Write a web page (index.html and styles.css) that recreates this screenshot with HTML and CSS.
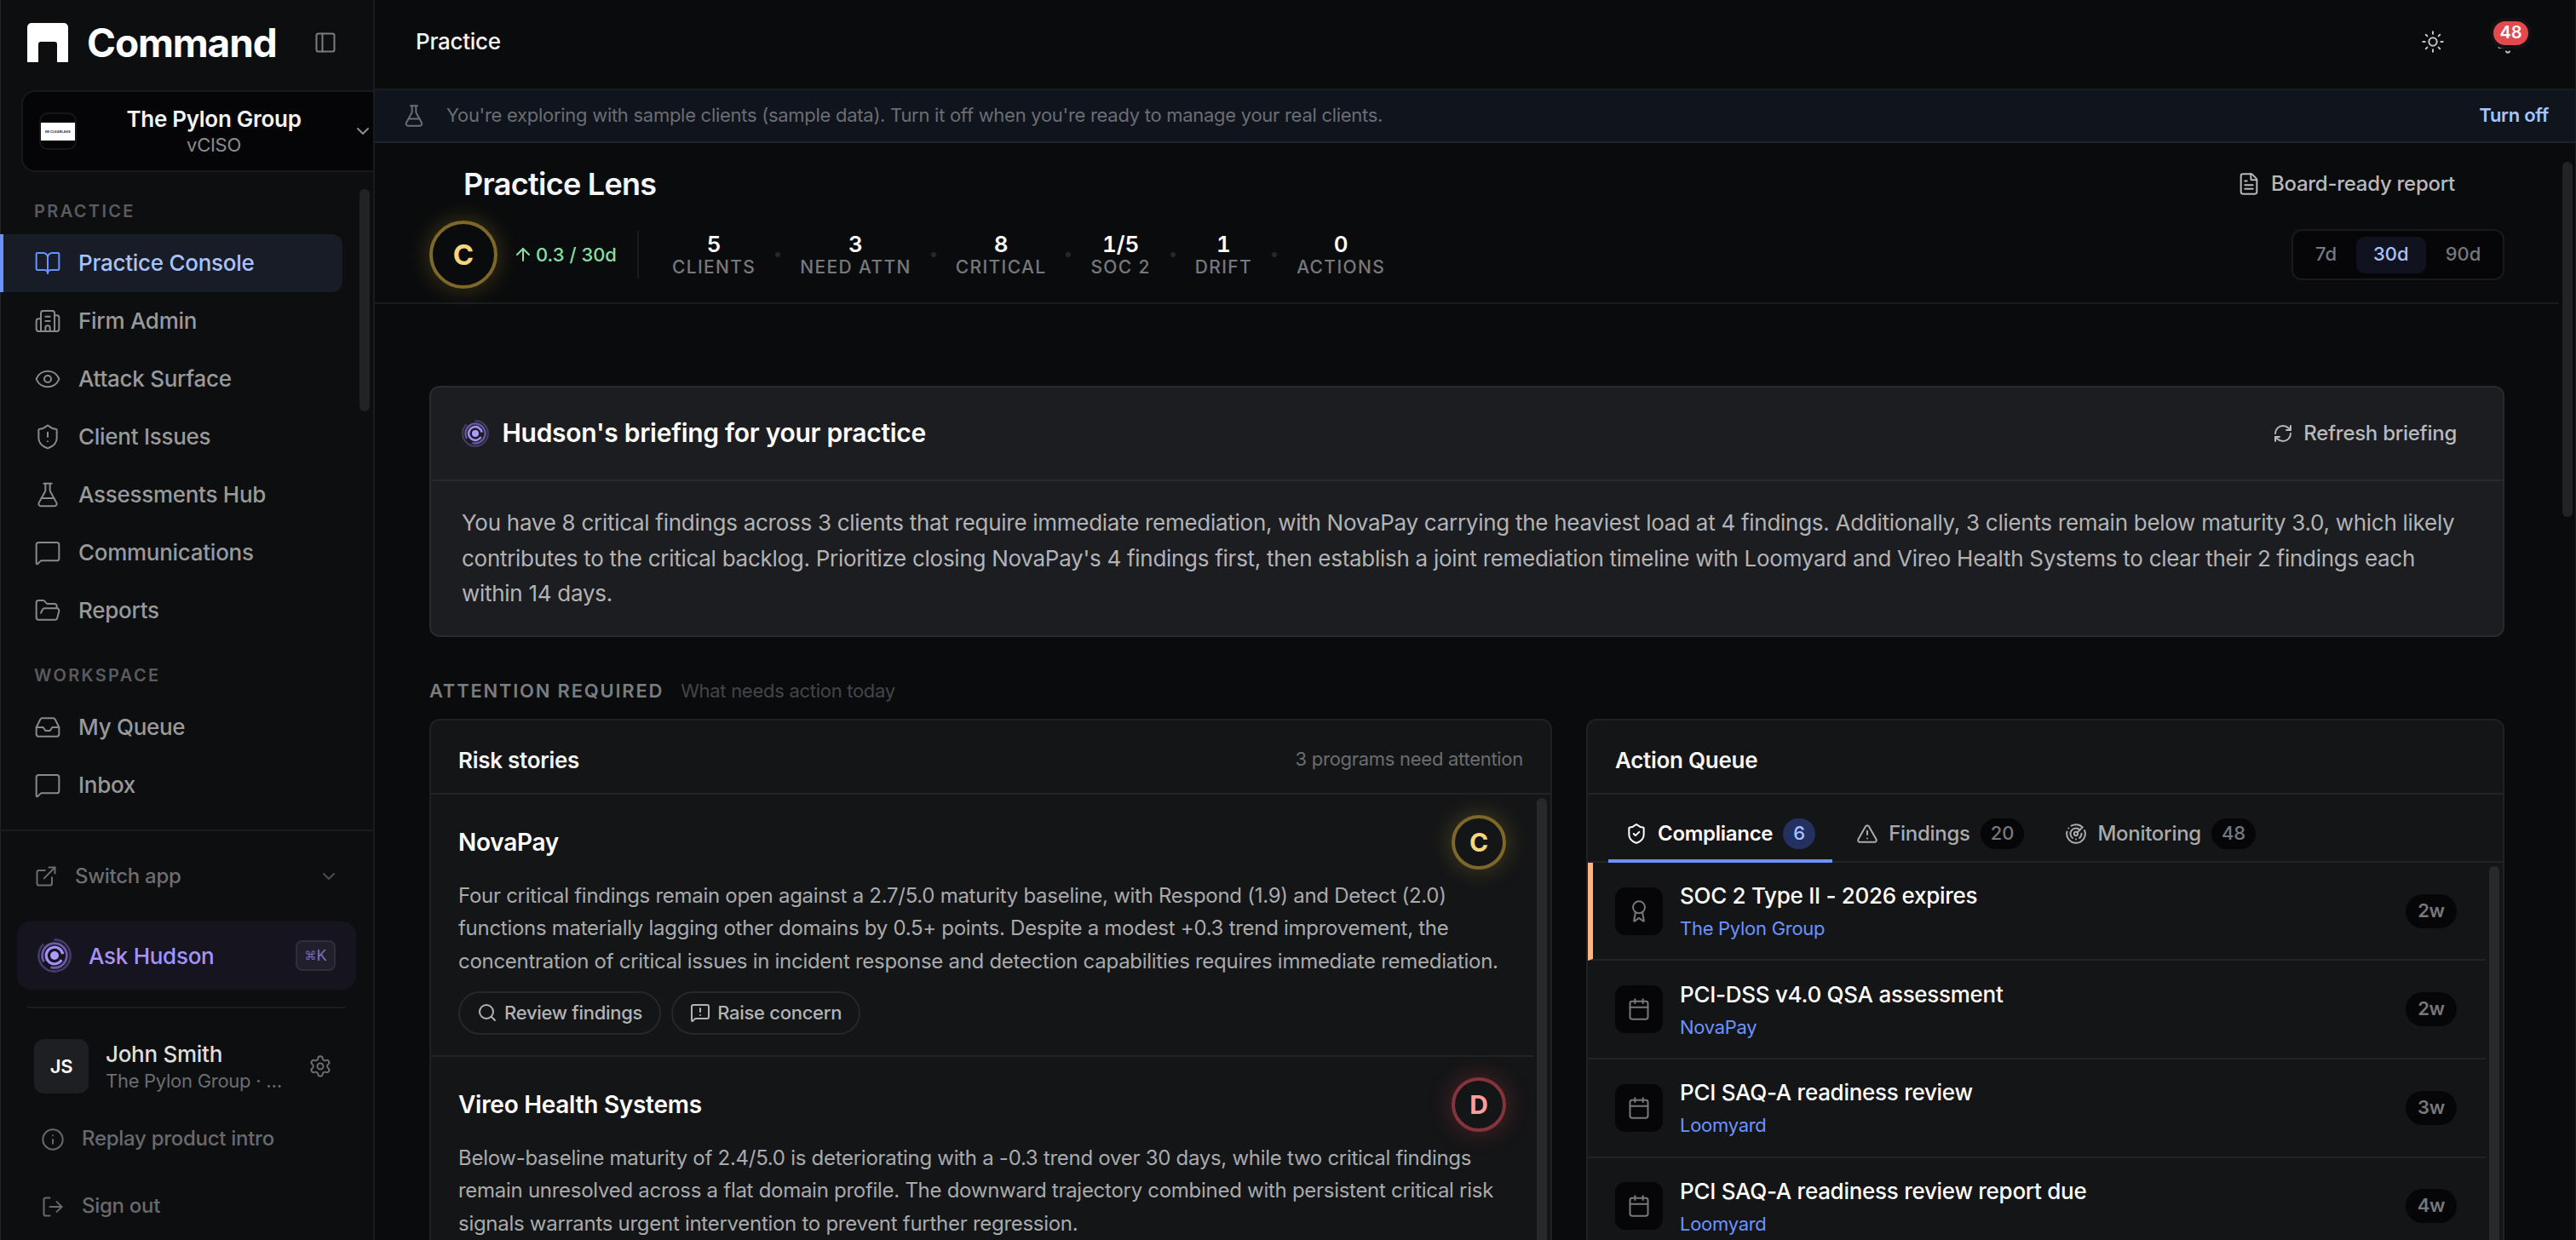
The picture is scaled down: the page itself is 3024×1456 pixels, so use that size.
FILE: index.html
```html
<!DOCTYPE html>
<html lang="en">
<head>
<meta charset="utf-8">
<title>Command – Practice Lens</title>
<link rel="stylesheet" href="styles.css">
</head>
<body>
<svg class="sprite" aria-hidden="true">
  <symbol id="panel" viewBox="0 0 24 24"><rect x="3" y="3" width="18" height="18" rx="2"/><path d="M9 3v18"/></symbol>
  <symbol id="chevron" viewBox="0 0 24 24"><path d="m6 9 6 6 6-6"/></symbol>
  <symbol id="book" viewBox="0 0 24 24"><path d="M12 7v14"/><path d="M3 18a1 1 0 0 1-1-1V4a1 1 0 0 1 1-1h5a4 4 0 0 1 4 4 4 4 0 0 1 4-4h5a1 1 0 0 1 1 1v13a1 1 0 0 1-1 1h-6a3 3 0 0 0-3 3 3 3 0 0 0-3-3z"/></symbol>
  <symbol id="building" viewBox="0 0 24 24"><path d="M10 12h4"/><path d="M10 8h4"/><path d="M14 21v-3a2 2 0 0 0-4 0v3"/><path d="M6 10H4a2 2 0 0 0-2 2v7a2 2 0 0 0 2 2h16a2 2 0 0 0 2-2V9a2 2 0 0 0-2-2h-2"/><path d="M6 21V5a2 2 0 0 1 2-2h8a2 2 0 0 1 2 2v16"/></symbol>
  <symbol id="eye" viewBox="0 0 24 24"><path d="M2.062 12.348a1 1 0 0 1 0-.696 10.75 10.75 0 0 1 19.876 0 1 1 0 0 1 0 .696 10.75 10.75 0 0 1-19.876 0"/><circle cx="12" cy="12" r="3"/></symbol>
  <symbol id="shield-alert" viewBox="0 0 24 24"><path d="M20 13c0 5-3.5 7.5-7.66 8.95a1 1 0 0 1-.67-.01C7.5 20.5 4 18 4 13V6a1 1 0 0 1 1-1c2 0 4.5-1.2 6.24-2.72a1.17 1.17 0 0 1 1.52 0C14.51 3.81 17 5 19 5a1 1 0 0 1 1 1z"/><path d="M12 8v4"/><path d="M12 16h.01"/></symbol>
  <symbol id="shield-check" viewBox="0 0 24 24"><path d="M20 13c0 5-3.5 7.5-7.66 8.95a1 1 0 0 1-.67-.01C7.5 20.5 4 18 4 13V6a1 1 0 0 1 1-1c2 0 4.5-1.2 6.24-2.72a1.17 1.17 0 0 1 1.52 0C14.51 3.81 17 5 19 5a1 1 0 0 1 1 1z"/><path d="m9 12 2 2 4-4"/></symbol>
  <symbol id="flask" viewBox="0 0 24 24"><path d="M14 2v6a2 2 0 0 0 .245.96l5.51 10.08A2 2 0 0 1 18 22H6a2 2 0 0 1-1.755-2.96l5.51-10.08A2 2 0 0 0 10 8V2"/><path d="M6.453 15h11.094"/><path d="M8.5 2h7"/></symbol>
  <symbol id="message" viewBox="0 0 24 24"><path d="M22 17a2 2 0 0 1-2 2H6.828a2 2 0 0 0-1.414.586l-2.202 2.202A.71.71 0 0 1 2 21.286V5a2 2 0 0 1 2-2h16a2 2 0 0 1 2 2z"/></symbol>
  <symbol id="message-warning" viewBox="0 0 24 24"><path d="M22 17a2 2 0 0 1-2 2H6.828a2 2 0 0 0-1.414.586l-2.202 2.202A.71.71 0 0 1 2 21.286V5a2 2 0 0 1 2-2h16a2 2 0 0 1 2 2z"/><path d="M12 15h.01"/><path d="M12 7v4"/></symbol>
  <symbol id="folder" viewBox="0 0 24 24"><path d="m6 14 1.5-2.9A2 2 0 0 1 9.24 10H20a2 2 0 0 1 1.94 2.5l-1.54 6a2 2 0 0 1-1.95 1.5H4a2 2 0 0 1-2-2V5a2 2 0 0 1 2-2h3.9a2 2 0 0 1 1.69.9l.81 1.2a2 2 0 0 0 1.67.9H18a2 2 0 0 1 2 2v2"/></symbol>
  <symbol id="tray" viewBox="0 0 24 24"><path d="M22 12h-6l-2 3h-4l-2-3H2"/><path d="M5.45 5.11 2 12v6a2 2 0 0 0 2 2h16a2 2 0 0 0 2-2v-6l-3.45-6.89A2 2 0 0 0 16.76 4H7.24a2 2 0 0 0-1.79 1.11z"/></symbol>
  <symbol id="external" viewBox="0 0 24 24"><path d="M15 3h6v6"/><path d="M10 14 21 3"/><path d="M18 13v6a2 2 0 0 1-2 2H5a2 2 0 0 1-2-2V8a2 2 0 0 1 2-2h6"/></symbol>
  <symbol id="gear" viewBox="0 0 24 24"><path d="M9.671 4.136a2.34 2.34 0 0 1 4.659 0 2.34 2.34 0 0 0 3.319 1.915 2.34 2.34 0 0 1 2.33 4.033 2.34 2.34 0 0 0 0 3.831 2.34 2.34 0 0 1-2.33 4.033 2.34 2.34 0 0 0-3.319 1.915 2.34 2.34 0 0 1-4.659 0 2.34 2.34 0 0 0-3.32-1.915 2.34 2.34 0 0 1-2.33-4.033 2.34 2.34 0 0 0 0-3.831A2.34 2.34 0 0 1 6.35 6.051a2.34 2.34 0 0 0 3.319-1.915"/><circle cx="12" cy="12" r="3"/></symbol>
  <symbol id="info" viewBox="0 0 24 24"><circle cx="12" cy="12" r="10"/><path d="M12 16v-4"/><path d="M12 8h.01"/></symbol>
  <symbol id="logout" viewBox="0 0 24 24"><path d="m16 17 5-5-5-5"/><path d="M21 12H9"/><path d="M9 21H5a2 2 0 0 1-2-2V5a2 2 0 0 1 2-2h4"/></symbol>
  <symbol id="sun" viewBox="0 0 24 24"><circle cx="12" cy="12" r="4"/><path d="M12 2v2"/><path d="M12 20v2"/><path d="m4.93 4.93 1.41 1.41"/><path d="m17.66 17.66 1.41 1.41"/><path d="M2 12h2"/><path d="M20 12h2"/><path d="m6.34 17.66-1.41 1.41"/><path d="m19.07 4.93-1.41 1.41"/></symbol>
  <symbol id="bell" viewBox="0 0 24 24"><path d="M10.3 21a1.94 1.94 0 0 0 3.4 0"/><path d="M6 8a6 6 0 0 1 12 0c0 7 3 9 3 9H3s3-2 3-9"/></symbol>
  <symbol id="file" viewBox="0 0 24 24"><path d="M6 22a2 2 0 0 1-2-2V4a2 2 0 0 1 2-2h8a2.4 2.4 0 0 1 1.704.706l3.588 3.588A2.4 2.4 0 0 1 20 8v12a2 2 0 0 1-2 2z"/><path d="M14 2v5a1 1 0 0 0 1 1h5"/><path d="M10 9H8"/><path d="M16 13H8"/><path d="M16 17H8"/></symbol>
  <symbol id="arrow-up" viewBox="0 0 24 24"><path d="m5 12 7-7 7 7"/><path d="M12 19V5"/></symbol>
  <symbol id="refresh" viewBox="0 0 24 24"><path d="M3 12a9 9 0 0 1 9-9 9.75 9.75 0 0 1 6.74 2.74L21 8"/><path d="M21 3v5h-5"/><path d="M21 12a9 9 0 0 1-9 9 9.75 9.75 0 0 1-6.74-2.74L3 16"/><path d="M8 16H3v5"/></symbol>
  <symbol id="search" viewBox="0 0 24 24"><path d="m21 21-4.34-4.34"/><circle cx="11" cy="11" r="8"/></symbol>
  <symbol id="triangle" viewBox="0 0 24 24"><path d="m21.73 18-8-14a2 2 0 0 0-3.48 0l-8 14A2 2 0 0 0 4 21h16a2 2 0 0 0 1.73-3"/><path d="M12 9v4"/><path d="M12 17h.01"/></symbol>
  <symbol id="radar" viewBox="0 0 24 24"><path d="M19.07 4.93A10 10 0 0 0 6.99 3.34"/><path d="M4 6h.01"/><path d="M2.29 9.62A10 10 0 1 0 21.31 8.35"/><path d="M16.24 7.76A6 6 0 1 0 8.23 16.67"/><path d="M12 18h.01"/><path d="M17.99 11.66A6 6 0 0 1 15.77 16.67"/><circle cx="12" cy="12" r="2"/><path d="m13.41 10.59 5.66-5.66"/></symbol>
  <symbol id="award" viewBox="0 0 24 24"><path d="m15.477 12.89 1.515 8.526a.5.5 0 0 1-.81.47l-3.58-2.687a1 1 0 0 0-1.197 0l-3.586 2.686a.5.5 0 0 1-.81-.469l1.514-8.526"/><circle cx="12" cy="8" r="6"/></symbol>
  <symbol id="calendar" viewBox="0 0 24 24"><path d="M8 2v4"/><path d="M16 2v4"/><rect x="3" y="4" width="18" height="18" rx="2"/><path d="M3 10h18"/></symbol>
  <symbol id="hudson" viewBox="0 0 40 40">
    <circle class="h-dot" cx="20" cy="20" r="5"/>
    <circle class="h-in" cx="20" cy="20" r="9.8" pathLength="360" stroke-dasharray="318 42" transform="rotate(32 20 20)"/>
    <circle class="h-mid" cx="20" cy="20" r="14.4" pathLength="360" stroke-dasharray="318 42" transform="rotate(150 20 20)"/>
    <circle class="h-out" cx="20" cy="20" r="18.6" pathLength="360" stroke-dasharray="318 42" transform="rotate(-92 20 20)"/>
  </symbol>
</svg>

<div class="app">
  <aside class="sidebar">
    <div class="brand">
      <svg class="logo" viewBox="0 0 48 46"><path d="M5 0h38a5 5 0 0 1 5 5v41H35V25a3 3 0 0 0-3-3H16a3 3 0 0 0-3 3v21H0V5a5 5 0 0 1 5-5z"/></svg>
      <span class="brand-name">Command</span>
      <svg class="ic s28 brand-toggle"><use href="#panel"/></svg>
    </div>
    <div class="tenant">
      <div class="tenant-logo"><div class="tenant-plate"><i></i><span>CLEARLAKE</span></div></div>
      <div class="tenant-text"><div class="tenant-name">The Pylon Group</div><div class="tenant-role">vCISO</div></div>
      <svg class="ic s24"><use href="#chevron"/></svg>
    </div>
    <nav class="nav">
      <div class="nav-label">PRACTICE</div>
      <a class="nav-item active"><svg class="ic s32"><use href="#book"/></svg><span>Practice Console</span></a>
      <a class="nav-item"><svg class="ic s32"><use href="#building"/></svg><span>Firm Admin</span></a>
      <a class="nav-item"><svg class="ic s32"><use href="#eye"/></svg><span>Attack Surface</span></a>
      <a class="nav-item"><svg class="ic s32"><use href="#shield-alert"/></svg><span>Client Issues</span></a>
      <a class="nav-item"><svg class="ic s32"><use href="#flask"/></svg><span>Assessments Hub</span></a>
      <a class="nav-item"><svg class="ic s32"><use href="#message"/></svg><span>Communications</span></a>
      <a class="nav-item"><svg class="ic s32"><use href="#folder"/></svg><span>Reports</span></a>
      <div class="nav-label second">WORKSPACE</div>
      <a class="nav-item"><svg class="ic s32"><use href="#tray"/></svg><span>My Queue</span></a>
      <a class="nav-item"><svg class="ic s32"><use href="#message"/></svg><span>Inbox</span></a>
      <div class="thumb nav-thumb"></div>
    </nav>
    <div class="side-foot">
      <div class="switch"><svg class="ic s28"><use href="#external"/></svg><span>Switch app</span><svg class="ic s24 push"><use href="#chevron"/></svg></div>
      <div class="ask"><svg class="hudson s40"><use href="#hudson"/></svg><span>Ask Hudson</span><kbd><span class="cmd">⌘</span>K</kbd></div>
      <div class="rule"></div>
      <div class="user">
        <div class="avatar">JS</div>
        <div class="user-text"><div class="user-name">John Smith</div><div class="user-org">The Pylon Group · …</div></div>
        <svg class="ic s28 push"><use href="#gear"/></svg>
      </div>
      <div class="foot-link"><svg class="ic s28"><use href="#info"/></svg><span>Replay product intro</span></div>
      <div class="foot-link"><svg class="ic s28"><use href="#logout"/></svg><span>Sign out</span></div>
    </div>
  </aside>

  <main class="main">
    <header class="topbar">
      <span class="crumb">Practice</span>
      <svg class="ic s28 push"><use href="#sun"/></svg>
      <div class="bell"><svg class="ic s28"><use href="#bell"/></svg><span class="bell-count">48</span></div>
    </header>
    <div class="banner">
      <svg class="ic s28"><use href="#flask"/></svg>
      <span>You're exploring with sample clients (sample data). Turn it off when you're ready to manage your real clients.</span>
      <a class="turn-off">Turn off</a>
    </div>

    <div class="page">
      <div class="thumb page-thumb"></div>
      <section class="lens">
        <div class="lens-top">
          <h1>Practice Lens</h1>
          <a class="ghost report"><svg class="ic s28"><use href="#file"/></svg><span>Board-ready report</span></a>
        </div>
        <div class="lens-row">
          <div class="grade gold big">C</div>
          <div class="trend"><svg class="ic s24"><use href="#arrow-up"/></svg>0.3 / 30d</div>
          <div class="stats">
            <div class="stat"><b>5</b><span>CLIENTS</span></div><i class="dot"></i>
            <div class="stat"><b>3</b><span>NEED ATTN</span></div><i class="dot"></i>
            <div class="stat"><b>8</b><span>CRITICAL</span></div><i class="dot"></i>
            <div class="stat"><b>1/5</b><span>SOC 2</span></div><i class="dot"></i>
            <div class="stat"><b>1</b><span>DRIFT</span></div><i class="dot"></i>
            <div class="stat"><b>0</b><span>ACTIONS</span></div>
          </div>
          <div class="segmented"><span>7d</span><span class="on">30d</span><span>90d</span></div>
        </div>
      </section>

      <div class="content">
        <section class="briefing">
          <div class="briefing-head">
            <svg class="hudson s32"><use href="#hudson"/></svg>
            <h2>Hudson's briefing for your practice</h2>
            <a class="ghost refresh"><svg class="ic s24"><use href="#refresh"/></svg><span>Refresh briefing</span></a>
          </div>
          <p>You have 8 critical findings across 3 clients that require immediate remediation, with NovaPay carrying the heaviest load at 4 findings. Additionally, 3 clients remain below maturity 3.0, which likely contributes to the critical backlog. Prioritize closing NovaPay's 4 findings first, then establish a joint remediation timeline with Loomyard and Vireo Health Systems to clear their 2 findings each within 14 days.</p>
        </section>

        <div class="section-title"><strong>ATTENTION REQUIRED</strong><span>What needs action today</span></div>

        <div class="columns">
          <section class="card">
            <div class="card-head"><h3>Risk stories</h3><span>3 programs need attention</span></div>
            <div class="scroll">
              <div class="thumb card-thumb"></div>
              <article class="story">
                <div class="story-head"><h4>NovaPay</h4><div class="grade gold">C</div></div>
                <p>Four critical findings remain open against a 2.7/5.0 maturity baseline, with Respond (1.9) and Detect (2.0) functions materially lagging other domains by 0.5+ points. Despite a modest +0.3 trend improvement, the concentration of critical issues in incident response and detection capabilities requires immediate remediation.</p>
                <div class="story-actions">
                  <a class="pill-btn"><svg class="ic s24"><use href="#search"/></svg>Review findings</a>
                  <a class="pill-btn"><svg class="ic s24"><use href="#message-warning"/></svg>Raise concern</a>
                </div>
              </article>
              <article class="story">
                <div class="story-head"><h4>Vireo Health Systems</h4><div class="grade red">D</div></div>
                <p>Below-baseline maturity of 2.4/5.0 is deteriorating with a -0.3 trend over 30 days, while two critical findings remain unresolved across a flat domain profile. The downward trajectory combined with persistent critical risk signals warrants urgent intervention to prevent further regression.</p>
              </article>
            </div>
          </section>

          <section class="card">
            <div class="card-head"><h3>Action Queue</h3></div>
            <div class="tabs">
              <div class="tab on"><svg class="ic s26"><use href="#shield-check"/></svg>Compliance<em>6</em></div>
              <div class="tab"><svg class="ic s26"><use href="#triangle"/></svg>Findings<em>20</em></div>
              <div class="tab"><svg class="ic s26"><use href="#radar"/></svg>Monitoring<em>48</em></div>
            </div>
            <div class="scroll">
              <div class="thumb card-thumb"></div>
              <div class="task urgent"><div class="task-icon"><svg class="ic s28"><use href="#award"/></svg></div><div class="task-text"><div class="task-title">SOC 2 Type II - 2026 expires</div><div class="task-client">The Pylon Group</div></div><span class="due">2w</span></div>
              <div class="task"><div class="task-icon"><svg class="ic s28"><use href="#calendar"/></svg></div><div class="task-text"><div class="task-title">PCI-DSS v4.0 QSA assessment</div><div class="task-client">NovaPay</div></div><span class="due">2w</span></div>
              <div class="task"><div class="task-icon"><svg class="ic s28"><use href="#calendar"/></svg></div><div class="task-text"><div class="task-title">PCI SAQ-A readiness review</div><div class="task-client">Loomyard</div></div><span class="due">3w</span></div>
              <div class="task"><div class="task-icon"><svg class="ic s28"><use href="#calendar"/></svg></div><div class="task-text"><div class="task-title">PCI SAQ-A readiness review report due</div><div class="task-client">Loomyard</div></div><span class="due">4w</span></div>
            </div>
          </section>
        </div>
      </div>
    </div>
  </main>
</div>
</body>
</html>
```
FILE: styles.css
```css
* { box-sizing: border-box; }
body {
  margin: 0;
  background: #0a0b0d;
  color: #f5f5f7;
  font-family: Inter, "Liberation Sans", sans-serif;
  font-size: 26px;
  letter-spacing: -0.28px;
  overflow: hidden;
}
h1, h2, h3, h4, p { margin: 0; font-weight: 600; }
.sprite { position: absolute; width: 0; height: 0; }

/* icons */
.ic { flex: none; fill: none; stroke: currentColor; stroke-width: 2px; stroke-linecap: round; stroke-linejoin: round; }
symbol * { vector-effect: non-scaling-stroke; }
.s24 { width: 24px; height: 24px; }
.s26 { width: 26px; height: 26px; }
.s28 { width: 28px; height: 28px; }
.s32 { width: 32px; height: 32px; }
.s40 { width: 40px; height: 40px; }
.push { margin-left: auto; }
.hudson { flex: none; fill: none; }
#hudson * { vector-effect: none; }
.h-dot { fill: #b09aff; }
.h-in { stroke: #a58ffb; stroke-width: 3.2; }
.h-mid { stroke: #6c5ba6; stroke-width: 2.8; }
.h-out { stroke: #453b69; stroke-width: 2.6; }

.thumb { position: absolute; width: 12px; border-radius: 6px; background: #222325; }

.app { display: flex; height: 100vh; }

/* sidebar */
.sidebar {
  display: flex;
  flex-direction: column;
  flex: none;
  width: 440px;
  background: #0d0e10;
  border-right: 2px solid #1a1b1e;
  box-shadow: inset 1px 0 #232527;
  overflow: hidden;
}
.brand { display: flex; align-items: center; flex: none; height: 100px; margin-bottom: 6px; padding: 0 42px 0 32px; }
.logo { width: 48px; height: 46px; fill: #fff; }
.brand-name { margin-left: 22px; font-size: 46px; font-weight: 700; letter-spacing: -1.15px; color: #fff; }
.brand-toggle { margin-left: auto; color: #7c7d80; }

.tenant {
  display: flex;
  align-items: center;
  flex: none;
  height: 96px;
  margin-left: 25px;
  padding-left: 19px;
  border: 2px solid #18191c;
  border-right: 0;
  border-radius: 16px 0 0 16px;
  background: #050507;
  color: #8b8c8f;
}
.tenant-logo { display: flex; align-items: center; flex: none; width: 44px; height: 44px; border: 2px solid #151618; border-radius: 10px; }
.tenant-plate { display: flex; align-items: center; justify-content: center; gap: 1px; width: 40px; height: 21px; background: #fff; }
.tenant-plate i { width: 5px; height: 3px; background: #6d8fc4; }
.tenant-plate span { font-size: 4px; line-height: 5px; font-weight: 700; letter-spacing: 0; color: #2b3550; }
.tenant-text { flex: 1; padding-right: 2px; text-align: center; }
.tenant-name { font-weight: 600; line-height: 32px; color: #f5f5f7; }
.tenant-role { font-size: 22px; line-height: 28px; }

.nav { position: relative; flex: 1; min-height: 0; padding-top: 32px; }
.nav-thumb { top: 20px; right: 4px; height: 261px; }
.nav-label { height: 28px; margin-bottom: 13px; padding-left: 40px; font-size: 20px; line-height: 28px; font-weight: 600; letter-spacing: 2.35px; color: #5a5b5e; }
.nav-label.second { margin-top: 28px; margin-bottom: 13px; }
.nav-item { display: flex; align-items: center; gap: 20px; width: 402px; height: 68px; padding-left: 40px; font-weight: 500; color: #98999b; }
.nav-item span { padding-bottom: 1px; }
.nav-item .ic { color: #88898b; }
.nav-item.active { padding-left: 36px; border-left: 4px solid #6b93ff; border-radius: 0 12px 12px 0; background: #171c27; color: #a9c3ff; }
.nav-item.active .ic { color: #6b93ff; }

.side-foot { flex: none; height: 482px; border-top: 2px solid #1b1c1f; }
.switch { display: flex; align-items: center; gap: 20px; height: 106px; padding: 0 40px; font-size: 24px; font-weight: 500; color: #6c6d70; }
.switch span { padding-bottom: 1px; }
.switch .s24 { color: #4d4e51; }
.ask { display: flex; align-items: center; gap: 20px; height: 80px; margin: 0 20px; padding: 0 24px; border-radius: 16px; background: #16141f; font-weight: 500; color: #a592fc; }
.ask kbd { display: flex; align-items: center; justify-content: center; width: 47px; height: 36px; margin-left: auto; border: 2px solid #302e3b; border-radius: 8px; background: #211f2b; font: 20px "Liberation Mono", monospace; letter-spacing: 0; color: #7a6cbb; }
.cmd { font: 14px "DejaVu Sans", sans-serif; }
.rule { height: 2px; margin: 20px 32px 0; background: #1b1c1f; }
.user { display: flex; align-items: center; margin-top: 35px; padding: 0 48px 0 40px; color: #6c6d70; }
.avatar { display: flex; align-items: center; justify-content: center; width: 64px; height: 64px; border-radius: 12px; background: #1e1f22; font-size: 22px; font-weight: 600; color: #fff; }
.user-text { margin-left: 20px; padding-top: 3px; }
.user-name { font-weight: 500; line-height: 32px; color: #dededf; }
.user-org { font-size: 22px; line-height: 30px; }
.foot-link { display: flex; align-items: center; gap: 20px; height: 79px; padding-left: 48px; font-size: 24px; font-weight: 500; color: #68696c; }
.foot-link:nth-last-child(2) { margin-top: 14px; }
.foot-link span { padding-bottom: 3px; }

/* main */
.main { display: flex; flex-direction: column; flex: 1; min-width: 0; box-shadow: inset -1px 0 #1d1e20; }
.topbar { display: flex; align-items: center; flex: none; height: 106px; padding: 0 66px 6px 48px; border-bottom: 2px solid #1b1c1e; color: #c4c5c7; }
.crumb { padding-bottom: 1px; font-weight: 500; color: #f5f5f7; }
.bell { position: relative; display: flex; margin-left: 60px; padding-top: 2px; }
.bell-count { position: absolute; left: -7px; top: -13px; width: 49px; height: 36px; border: 4px solid #111214; border-radius: 18px; background: #e5484d; font-size: 20px; line-height: 27px; font-weight: 600; text-align: center; letter-spacing: 0; color: #fff; }
.banner { display: flex; align-items: center; gap: 24px; flex: none; height: 62px; margin-right: 1px; padding: 0 31px 0 32px; border-bottom: 2px solid #1e242b; background: #10141d; font-size: 22px; color: #6a6d73; }
.banner span, .turn-off { padding-bottom: 2px; }
.turn-off { margin-left: auto; font-weight: 600; color: #a9c3ff; }

.page { position: relative; flex: 1; min-height: 0; padding-right: 20px; overflow: hidden; }
.page-thumb { top: 22px; right: 4px; height: 417px; }
.lens { padding: 20px 64px 16px; border-bottom: 2px solid #1a1b1d; }
.lens-top { display: flex; align-items: center; justify-content: space-between; height: 56px; margin-bottom: 15px; padding-left: 40px; }
h1 { font-size: 36px; letter-spacing: -0.72px; }
.ghost { display: flex; align-items: center; gap: 12px; font-size: 24px; font-weight: 500; color: #b8b9bb; }
.ghost span { padding-bottom: 2px; }
.report { margin-right: 58px; }
.lens-row { display: flex; align-items: center; height: 80px; }

.grade { display: flex; align-items: center; justify-content: center; flex: none; width: 64px; height: 64px; border: 4px solid; border-radius: 50%; font-size: 30px; font-weight: 700; letter-spacing: 0; }
.grade.big { width: 80px; height: 80px; font-size: 33px; }
.gold { border-color: #7d6829; color: #f5d77a; box-shadow: 0 0 28px rgba(240, 200, 60, 0.24); }
.red { border-color: #84343a; color: #ff9c9c; box-shadow: 0 0 28px rgba(229, 72, 77, 0.3); }

.trend { display: flex; align-items: center; gap: 3px; width: 146px; margin-left: 18px; padding-bottom: 1px; font-size: 22px; font-weight: 500; letter-spacing: 0; color: #86dfa1; }
.stats { display: flex; align-items: center; gap: 23px; height: 56px; padding-left: 39px; border-left: 2px solid #191a1d; }
.stat { display: flex; flex-direction: column; align-items: center; padding-top: 1px; }
.stat b { font-weight: 600; line-height: 27px; letter-spacing: 0; font-variant-numeric: tabular-nums; color: #fff; }
.stat span { font-size: 21px; font-weight: 500; line-height: 27px; letter-spacing: 1.35px; color: #77787b; }
.dot { width: 6px; height: 6px; border-radius: 50%; background: #27282b; }
.segmented { display: flex; align-items: center; gap: 3px; width: 250px; height: 60px; margin-left: auto; padding: 0 6px; border: 2px solid #191a1c; border-radius: 12px; background: #060608; font-size: 22px; font-weight: 500; color: #77787b; }
.segmented span { height: 43px; padding: 0 20px; border-radius: 10px; line-height: 41px; letter-spacing: 0; }
.segmented .on { background: #10131f; color: #a9c3ff; }

.content { padding: 96px 64px 0; }
.briefing { border: 2px solid #292a2d; border-radius: 12px; background: #1c1d21; }
.briefing-head { display: flex; align-items: center; height: 110px; padding: 0 54px 0 36px; border-bottom: 2px solid #292a2d; }
h2 { margin-left: 15.5px; padding-bottom: 2px; font-size: 30px; color: #fff; }
.refresh { margin-left: auto; }
.briefing p { padding: 28px 36px; font-weight: 400; line-height: 41.6px; color: #b2b3b5; }

.section-title { display: flex; align-items: center; gap: 20px; height: 28px; margin: 49px 0 19px; font-size: 22px; color: #444548; }
.section-title strong { font-weight: 600; letter-spacing: 1.76px; color: #7b7c7f; }

.columns { display: grid; grid-template-columns: 1318px 1fr; gap: 40px; height: 1100px; }
.card { display: flex; flex-direction: column; border: 2px solid #202124; border-radius: 12px; background: #141517; }
.card-head { display: flex; align-items: center; justify-content: space-between; flex: none; height: 87px; padding: 8px 32px 0; border-bottom: 2px solid #222326; }
.card-head span { padding-bottom: 3px; font-size: 22px; color: #6c6d70; }
h3 { font-size: 26px; }
.scroll { position: relative; flex: 1; padding-right: 20px; }
.card-thumb { top: 4px; right: 4px; height: 900px; background: #28292b; }

.story { padding: 24px 32px; border-bottom: 2px solid #222326; }
.story-head { display: flex; align-items: center; justify-content: space-between; }
h4 { font-size: 28px; color: #fff; }
.story p { margin-top: 12px; font-size: 24px; font-weight: 400; line-height: 38.4px; color: #a9aaac; }
.story-actions { display: flex; gap: 12px; margin-top: 16px; }
.pill-btn { display: flex; align-items: center; gap: 8px; height: 51px; padding: 0 20px 1px; border: 2px solid #26272a; border-radius: 26px; font-size: 22px; font-weight: 500; color: #b2b3b5; }

.tabs { display: flex; gap: 8px; flex: none; height: 80px; padding-left: 24px; border-bottom: 2px solid #222326; }
.tab { display: flex; align-items: center; gap: 12px; height: 80px; padding: 16px 20px 0; border-bottom: 4px solid transparent; font-size: 24px; font-weight: 500; color: #a9aaac; }
.tab.on { border-color: #6b93ff; font-weight: 600; color: #fff; }
.tab em { height: 36px; padding: 0 12px; border-radius: 18px; background: #060608; font-size: 22px; font-style: normal; font-weight: 500; line-height: 35px; letter-spacing: 0; color: #77787b; }
.tab.on em { background: #233060; color: #a9c3ff; }

.task { display: flex; align-items: center; height: 115.6px; padding: 0 34px 0 32px; border-bottom: 2px solid #222326; }
.task.urgent { padding-left: 26px; border-left: 6px solid #ffb57c; }
.task-icon { display: flex; align-items: center; justify-content: center; flex: none; width: 56px; height: 56px; border-radius: 12px; background: #060608; color: #77787b; }
.task-text { flex: 1; margin-left: 20px; padding-top: 2px; }
.task-title { font-weight: 500; line-height: 39px; color: #fff; }
.task-client { font-size: 22px; line-height: 38px; color: #6b93ff; }
.due { width: 60px; height: 40px; border-radius: 20px; background: #060608; font-size: 22px; line-height: 39px; font-weight: 600; text-align: center; color: #77787b; }
```
